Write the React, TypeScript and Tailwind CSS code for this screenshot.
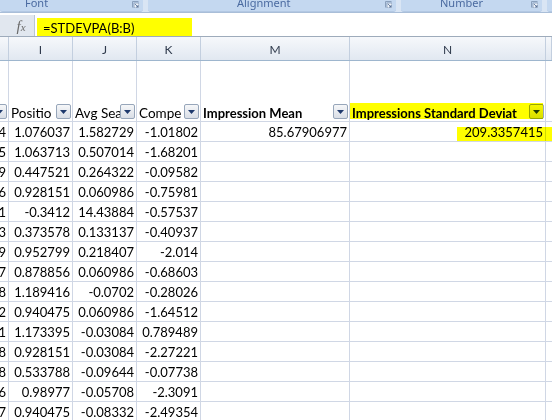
import React from "react";

const colH = ["4", "5", "9", "6", "1", "3", "9", "7", "8", "2", "1", "8", "8", "6", "7"];
const colI = ["1.076037", "1.063713", "0.447521", "0.928151", "-0.3412", "0.373578", "0.952799", "0.878856", "1.189416", "0.940475", "1.173395", "0.928151", "0.533788", "0.98977", "0.940475"];
const colJ = ["1.582729", "0.507014", "0.264322", "0.060986", "14.43884", "0.133137", "0.218407", "0.060986", "-0.0702", "0.060986", "-0.03084", "-0.03084", "-0.09644", "-0.05708", "-0.08332"];
const colK = ["-1.01802", "-1.68201", "-0.09582", "-0.75981", "-0.57537", "-0.40937", "-2.014", "-0.68603", "-0.28026", "-1.64512", "0.789489", "-2.27221", "-0.07738", "-2.3091", "-2.49354"];

const rows = colH.map((h, i) => ({
  h,
  i: colI[i],
  j: colJ[i],
  k: colK[i],
  m: i === 0 ? "85.67906977" : "",
  n: i === 0 ? "209.3357415" : "",
}));

const gridCols = "grid grid-cols-[9px_64px_64px_64px_149px_196px_1fr]";

function Launcher() {
  return (
    <svg width="7" height="7" viewBox="0 0 7 7" className="shrink-0">
      <path d="M0.5 6.5V0.5H6.5" fill="none" stroke="#8aa0bd" strokeWidth="1" />
      <rect x="2" y="2" width="5" height="5" fill="#eef3fa" stroke="#7d93b2" strokeWidth="0.8" />
      <path d="M3 3L6 6M6 4V6H4" fill="none" stroke="#4a6691" strokeWidth="0.8" />
    </svg>
  );
}

function RibbonGroup({ width, label, pl, last }: { width: string; label?: string; pl?: string; last?: boolean }) {
  return (
    <div className={`${width} h-full bg-[#c4d8f0] rounded-b-[3px] border-b border-[#b3c8e3] flex items-start shrink-0 ${pl ?? ""}`}>
      {label && (
        <span className="-mt-[3px] leading-[11px] text-[11px] text-[#4a6aa0] font-['Noto_Sans',sans-serif] whitespace-nowrap">
          {label}
        </span>
      )}
      <div className="flex-1" />
      {!last && (
        <div className="mt-[1px] mr-[4px]">
          <Launcher />
        </div>
      )}
    </div>
  );
}

function FilterButton() {
  return (
    <div className="w-[15px] h-[15px] shrink-0 mb-[2px] mr-[1px] rounded-[2px] border border-[#97a6ba] bg-linear-to-b from-[#f6f7f9] to-[#d9dee6] flex items-center justify-center">
      <svg width="7" height="4" viewBox="0 0 7 4">
        <path d="M0 0H7L3.5 4Z" fill="#1f3a6d" />
      </svg>
    </div>
  );
}

function HeaderCell({ label, bold }: { label?: string; bold?: boolean }) {
  return (
    <div className="h-[61px] border-r border-b border-[#d0d7e5] flex items-end justify-end overflow-hidden">
      {label !== undefined && (
        <span className={`flex-1 min-w-0 overflow-hidden whitespace-nowrap leading-[16px] pl-[2px] ${bold ? "font-bold" : "text-[13.5px]"}`}>
          {label}
        </span>
      )}
      <FilterButton />
    </div>
  );
}

function Cell({ value }: { value: string }) {
  return (
    <div className="h-[20px] border-r border-b border-[#d0d7e5] flex items-end justify-end pr-[2px] overflow-hidden whitespace-nowrap leading-[17px]">
      {value}
    </div>
  );
}

export default function App() {
  const letters = ["", "I", "J", "K", "M", "N", ""];

  return (
    <div className="relative w-[552px] h-[420px] overflow-hidden bg-white font-['Lato',sans-serif] text-[13px] text-black">
      {/* ribbon group labels */}
      <div className="h-[12px] flex gap-[5px] bg-[#d9e5f4] overflow-hidden">
        <RibbonGroup width="w-[143px]" label="Font" pl="pl-[25px]" />
        <RibbonGroup width="w-[248px]" label="Alignment" pl="pl-[89px]" />
        <RibbonGroup width="w-[141px]" label="Number" pl="pl-[39px]" />
        <RibbonGroup width="w-[20px]" last />
      </div>
      <div className="h-[1px] bg-[#a9bed8]" />
      <div className="h-[2px] bg-white" />

      {/* formula bar */}
      <div className="h-[22px] flex border-b border-[#9eabbb]">
        <div className="w-[35px] bg-[#e1e7ef] border-r border-[#bac6d5] flex items-center justify-center pl-[8px] pt-[1px]">
          <span className="font-['Liberation_Serif',serif] italic text-[#6a6a6a] text-[15px] leading-none">
            f<span className="text-[11px]">x</span>
          </span>
        </div>
        <div className="flex-1 bg-white flex items-end">
          <div className="ml-[2px] w-[155px] h-[18px] bg-[#ffff00] pl-[6px] pt-[2px] leading-[16px] whitespace-nowrap">
            =STDEVPA(B:B)
          </div>
        </div>
      </div>

      {/* column letters */}
      <div className={`${gridCols} h-[24px] border-b border-[#9eb6ce] bg-linear-to-b from-[#f6f8fb] to-[#e1e8f1]`}>
        {letters.map((l, idx) => (
          <div
            key={idx}
            className="border-r border-[#c3cfdf] flex items-center justify-center text-[12px] text-[#2f3a4c] pt-[2px]"
          >
            {l}
          </div>
        ))}
      </div>

      {/* autofilter header row */}
      <div className={gridCols}>
        <HeaderCell />
        <HeaderCell label="Positio" />
        <HeaderCell label="Avg Sea" />
        <HeaderCell label="Compe" />
        <HeaderCell label="Impression Mean" bold />
        <HeaderCell label="Impressions Standard Deviat" bold />
        <div className="h-[61px] border-b border-[#d0d7e5]" />
      </div>

      {/* data rows */}
      {rows.map((r, idx) => (
        <div key={idx} className={gridCols}>
          <Cell value={r.h} />
          <Cell value={r.i} />
          <Cell value={r.j} />
          <Cell value={r.k} />
          <Cell value={r.m} />
          <Cell value={r.n} />
          <div className="h-[20px] border-b border-[#d0d7e5]" />
        </div>
      ))}

      {/* highlighter marks drawn over the sheet */}
      <div className="absolute left-[350px] top-[103px] w-[193px] h-[16px] bg-[#ffff00] mix-blend-multiply" />
      <div className="absolute left-[457px] top-[127px] w-[95px] h-[14px] bg-[#ffff00] mix-blend-multiply" />
    </div>
  );
}
